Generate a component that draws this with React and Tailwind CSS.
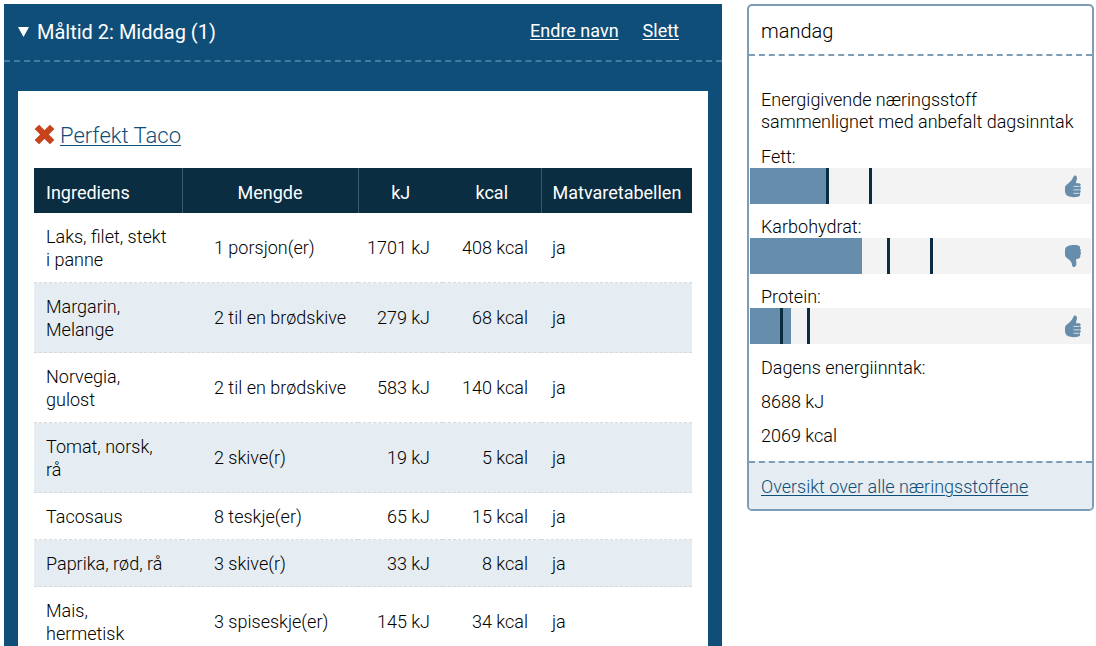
const rows = [
  ["Laks, filet, stekt i panne", "1 porsjon(er)", "1701 kJ", "408 kcal", "ja"],
  ["Margarin, Melange", "2 til en brødskive", "279 kJ", "68 kcal", "ja"],
  ["Norvegia, gulost", "2 til en brødskive", "583 kJ", "140 kcal", "ja"],
  ["Tomat, norsk, rå", "2 skive(r)", "19 kJ", "5 kcal", "ja"],
  ["Tacosaus", "8 teskje(er)", "65 kJ", "15 kcal", "ja"],
  ["Paprika, rød, rå", "3 skive(r)", "33 kJ", "8 kcal", "ja"],
  ["Mais, hermetisk", "3 spiseskje(er)", "145 kJ", "34 kcal", "ja"],
];

const nutrients = [
  { name: "Fett", value: 23, min: 22.2, max: 34.9, ok: true },
  { name: "Karbohydrat", value: 32.8, min: 40.3, max: 52.7, ok: false },
  { name: "Protein", value: 12, min: 8.8, max: 16.8, ok: true },
];

function ThumbUp() {
  return (
    <svg viewBox="0 0 16 23" className="h-[23px] w-4 fill-[#668dab]" aria-hidden="true">
      <path d="M9.3.6c1.6-.5 2.700.6 2.700 2.200 0 2-1 3.500-1 5.400h3.200c1.900 0 1.900 2.900.2 3.100 2.100.3 2 3.300.1 3.500 1.700.4 1.500 3.200-.2 3.300 1.300.5 1 3.200-.7 3.400-3 .9-8.200.9-10.600-.4C.9 20 0 18.400 0 15.800V13c0-2.200 1.300-3.100 3.200-4.500C5.600 6.700 7.300 4.500 8 2.500z" />
      <path d="M8.500 11.400h6M8.500 14.900h6M8.500 18.300h5.700" fill="none" stroke="#f3f3f3" strokeWidth="0.8" />
    </svg>
  );
}

function ThumbDown() {
  return (
    <svg viewBox="0 0 16 22" className="h-[22px] w-4 fill-[#668dab]" aria-hidden="true">
      <path d="M4 .7C6.500-.1 11 0 13.200.5c1.500.3 2.200 1.700 1.600 2.900 1.100.8 1.400 2.200.6 3.200.9 1.100.8 2.700-.2 3.500.5 1.800-.4 3.400-1.900 3.600l-2.100.3c-.3 1.500.2 2.600.2 4.500 0 2.200-.8 3.400-2.600 3.400-1.900 0-1.500-2.100-2.200-4-.6-1.600-2-3-4.200-4.500C.7 12.300 0 11.100 0 8.600V5.200C0 2.700 1.600 1.200 4 .7z" />
    </svg>
  );
}

function Meter({ name, value, min, max, ok }) {
  return (
    <div>
      <p className="px-3 leading-[22px]">{name}:</p>
      <div className="relative mx-px flex h-9 items-center justify-end bg-[#f3f3f3] pr-[10px]">
        <div className="absolute inset-y-0 left-0 bg-[#668dab]" style={{ width: `${value}%` }} />
        <div className="absolute inset-y-0 w-[3px] bg-[#0b2d42]" style={{ left: `${min}%` }} />
        <div className="absolute inset-y-0 w-[3px] bg-[#0b2d42]" style={{ left: `${max}%` }} />
        {ok ? <ThumbUp /> : <ThumbDown />}
      </div>
    </div>
  );
}

export default function App() {
  return (
    <main className="grid grid-cols-[minmax(0,718fr)_minmax(0,347fr)] items-start gap-[25px] bg-white pt-1 pr-[2px] pl-1 font-['Roboto','Liberation_Sans',sans-serif] text-[18px] font-light text-black">
      <section className="bg-[#0f4e79] pb-4">
        <header className="flex h-[58px] items-center justify-between border-b-2 border-dashed border-[#447ba3] pr-[43px] pl-3.5 font-normal text-white">
          <h2>
            <button type="button" className="flex items-center gap-2 text-[20px]">
              <svg viewBox="0 0 11 10" className="h-[10px] w-[11px] fill-white" aria-hidden="true">
                <path d="M0 0h11L5.500 10z" />
              </svg>
              Måltid 2: Middag (1)
            </button>
          </h2>
          <nav className="flex gap-6 pb-1">
            <a href="#endre" className="underline underline-offset-2">Endre navn</a>
            <a href="#slett" className="underline underline-offset-2">Slett</a>
          </nav>
        </header>

        <article className="mx-3.5 mt-[29px] bg-white px-4 pt-[31px] pb-4">
          <div className="flex items-center gap-[5px]">
            <button type="button" aria-label="Fjern Perfekt Taco" className="pb-1">
              <svg viewBox="0 0 22 22" className="size-[21px]" aria-hidden="true">
                <path d="M3 3 19 19M19 3 3 19" stroke="#c6431b" strokeWidth="6.600" />
              </svg>
            </button>
            <a href="#taco" className="text-[22px] leading-7 text-[#0f4e79] underline decoration-1 underline-offset-2">
              Perfekt Taco
            </a>
          </div>

          <table className="mt-[18px] w-full table-fixed border-collapse text-left">
            <colgroup>
              <col className="w-[148px]" />
              <col className="w-[176px]" />
              <col className="w-[85px]" />
              <col className="w-[98px]" />
              <col className="w-[151px]" />
            </colgroup>
            <thead>
              <tr className="h-[45px] bg-[#0b2d42] text-white">
                <th className="border-r border-[#3c5a6e] px-3 pt-[3px] font-normal">Ingrediens</th>
                <th className="border-r border-[#3c5a6e] pt-[3px] text-center font-normal">Mengde</th>
                <th className="pt-[3px] text-center font-normal">kJ</th>
                <th className="border-r border-[#3c5a6e] pt-[3px] text-center font-normal">kcal</th>
                <th className="px-[11px] pt-[3px] font-normal">Matvaretabellen</th>
              </tr>
            </thead>
            <tbody>
              {rows.map(([ingredient, amount, kj, kcal, listed]) => (
                <tr key={ingredient} className="border-b border-dashed border-[#d9d9d9] leading-[23px] even:bg-[#e5edf2]">
                  <td className="pt-3 pr-[14px] pb-[11px] pl-3">{ingredient}</td>
                  <td className="pl-8">{amount}</td>
                  <td className="pr-[13px] text-right">{kj}</td>
                  <td className="pr-[13px] text-right">{kcal}</td>
                  <td className="pl-[11px]">{listed}</td>
                </tr>
              ))}
            </tbody>
          </table>
        </article>
      </section>

      <aside className="overflow-hidden rounded-[5px] border-2 border-[#7d9db7]">
        <h2 className="border-b-2 border-dashed border-[#7d9db7] px-3 pt-2.5 pb-2 text-[20px] leading-[30px]">mandag</h2>
        <p className="px-3 pt-[33px] pb-[13px] leading-[22px]">
          Energigivende næringsstoff sammenlignet med anbefalt dagsinntak
        </p>
        <div className="flex flex-col gap-3">
          {nutrients.map((n) => (
            <Meter key={n.name} {...n} />
          ))}
        </div>
        <div className="flex flex-col gap-3 px-3 pt-[13px] pb-[14px] leading-[22px]">
          <p>Dagens energiinntak:</p>
          <p>8688 kJ</p>
          <p>2069 kcal</p>
        </div>
        <footer className="border-t-2 border-dashed border-[#7d9db7] bg-[#e5edf2] px-3 pt-[13px] pb-[11px] leading-[22px]">
          <a href="#oversikt" className="text-[#0f4e79] underline decoration-1 underline-offset-2">
            Oversikt over alle næringsstoffene
          </a>
        </footer>
      </aside>
    </main>
  );
}
